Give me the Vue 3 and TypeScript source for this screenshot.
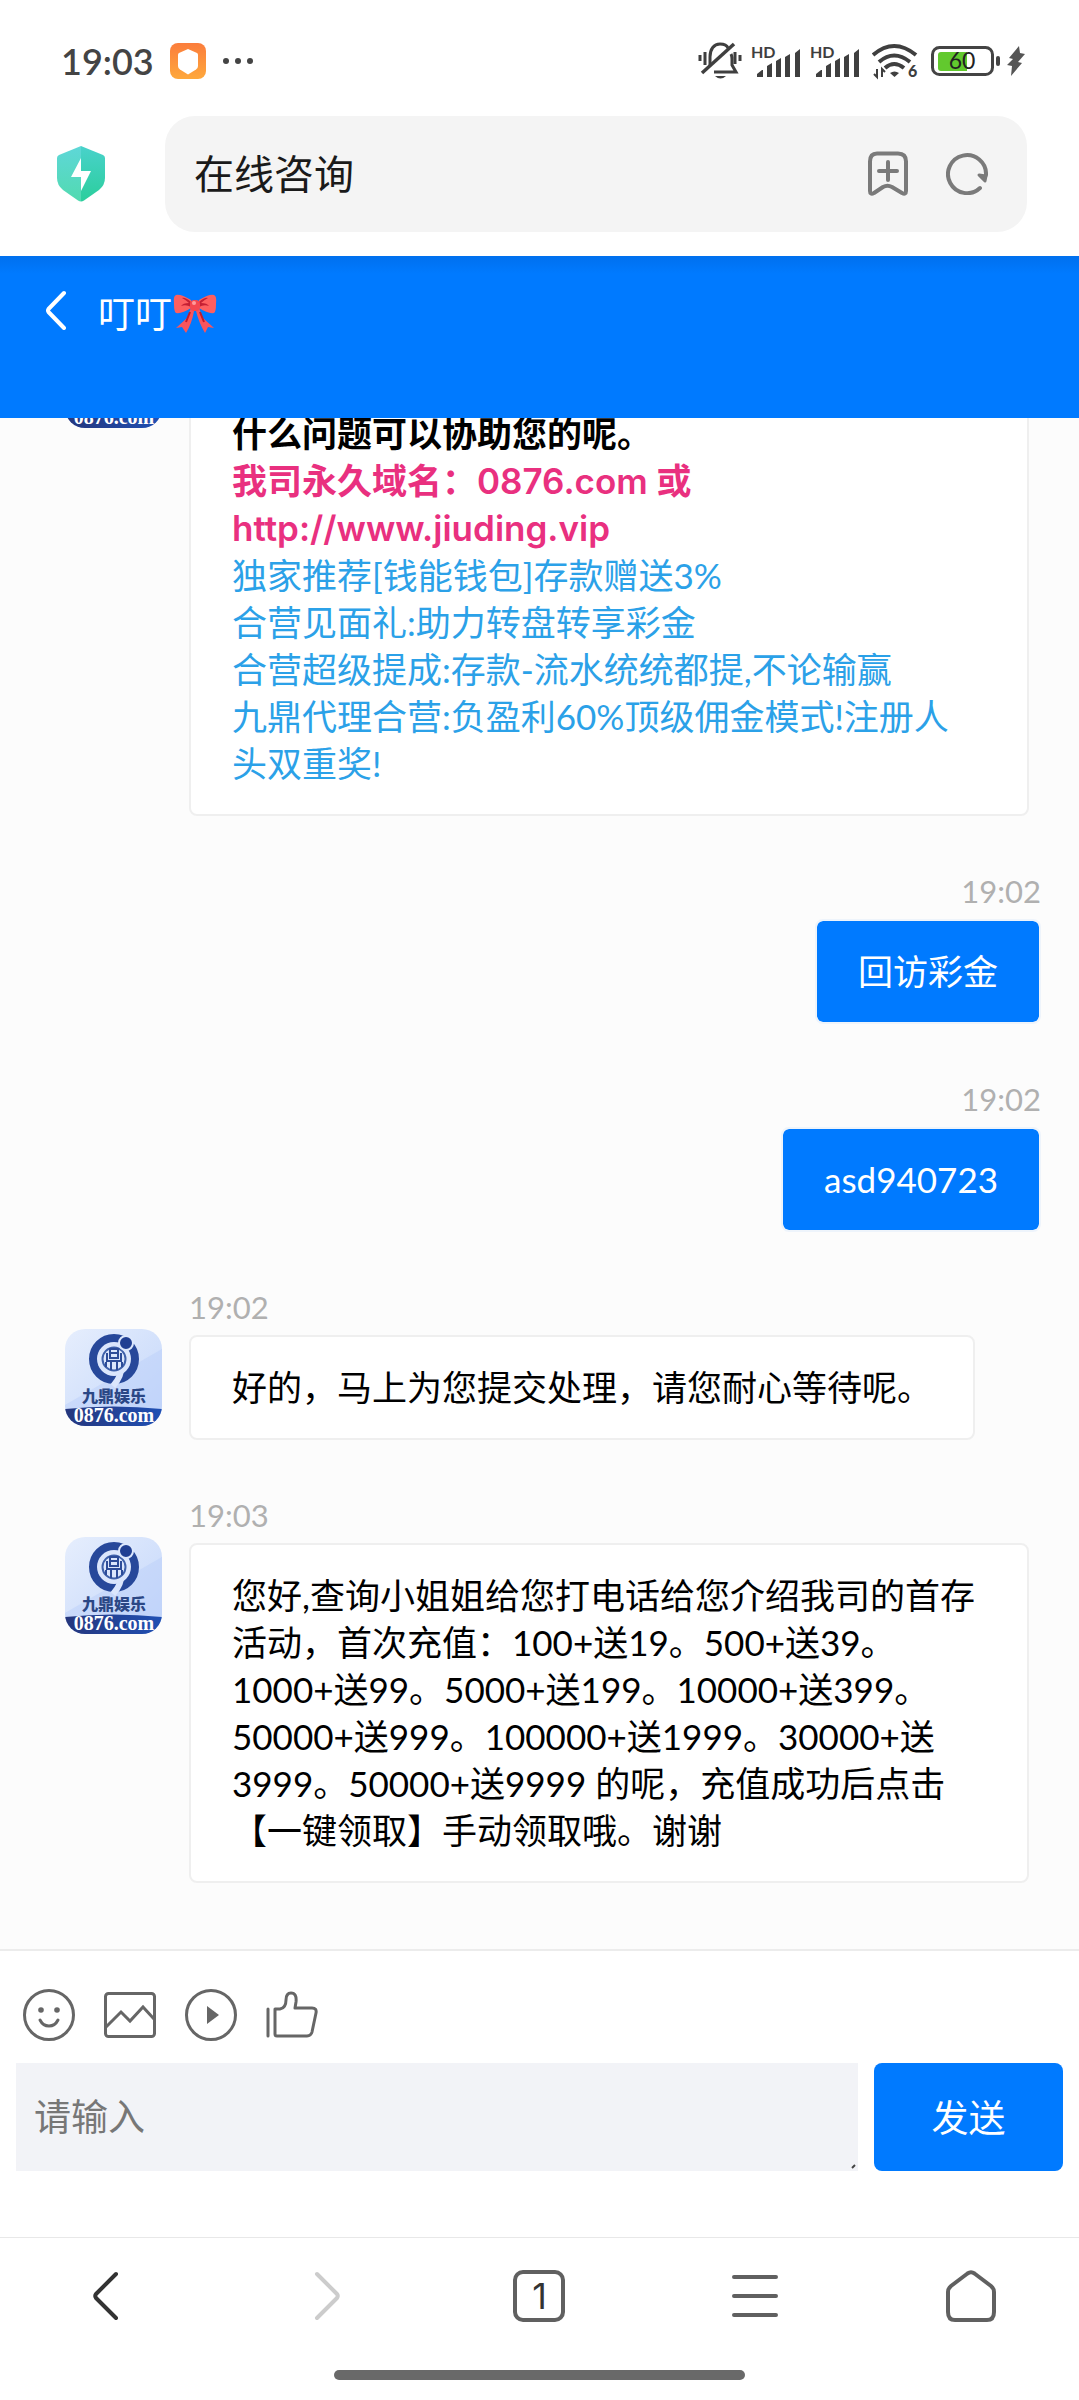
<script setup lang="ts">
import { ref } from 'vue'

interface Line {
  text: string
  tone?: 'strong' | 'pink' | 'sky'
}

interface Message {
  id: number
  mine: boolean
  time?: string
  wide?: boolean
  continued?: boolean
  lines: Line[]
}

const address = ref('在线咨询')
const draft = ref('')

const messages: Message[] = [
  {
    id: 1,
    mine: false,
    wide: true,
    continued: true,
    lines: [
      { text: '什么问题可以协助您的呢。', tone: 'strong' },
      { text: '我司永久域名：0876.com 或', tone: 'pink' },
      { text: 'http://www.jiuding.vip', tone: 'pink' },
      { text: '独家推荐[钱能钱包]存款赠送3%', tone: 'sky' },
      { text: '合营见面礼:助力转盘转享彩金', tone: 'sky' },
      { text: '合营超级提成:存款-流水统统都提,不论输赢', tone: 'sky' },
      { text: '九鼎代理合营:负盈利60%顶级佣金模式!注册人', tone: 'sky' },
      { text: '头双重奖!', tone: 'sky' },
    ],
  },
  { id: 2, mine: true, time: '19:02', lines: [{ text: '回访彩金' }] },
  { id: 3, mine: true, time: '19:02', lines: [{ text: 'asd940723' }] },
  {
    id: 4,
    mine: false,
    time: '19:02',
    lines: [{ text: '好的，马上为您提交处理，请您耐心等待呢。' }],
  },
  {
    id: 5,
    mine: false,
    time: '19:03',
    wide: true,
    lines: [
      { text: '您好,查询小姐姐给您打电话给您介绍我司的首存' },
      { text: '活动，首次充值：100+送19。500+送39。' },
      { text: '1000+送99。5000+送199。10000+送399。' },
      { text: '50000+送999。100000+送1999。30000+送' },
      { text: '3999。50000+送9999 的呢，充值成功后点击' },
      { text: '【一键领取】手动领取哦。谢谢' },
    ],
  },
]
</script>

<template>
  <div class="page">
    <div class="status">
      <div class="status-side">
        <span class="clock">19:03</span>
        <svg class="app-badge" width="36" height="36" viewBox="0 0 36 36">
          <defs>
            <linearGradient id="badge" x1="0" y1="0" x2="0" y2="1">
              <stop offset="0" stop-color="#fb7d3c" />
              <stop offset="1" stop-color="#fea83c" />
            </linearGradient>
          </defs>
          <rect width="36" height="36" rx="8" fill="url(#badge)" />
          <path d="M18 6l9 4q1 .5 1 2v11q0 2-2 3.500l-8 5-8-5q-2-1.500-2-3.500V12q0-1.500 1-2z" fill="#fff" />
        </svg>
        <svg width="32" height="8" viewBox="0 0 32 8" fill="#444">
          <circle cx="4" cy="4" r="3" /><circle cx="16" cy="4" r="3" /><circle cx="28" cy="4" r="3" />
        </svg>
      </div>
      <div class="status-side icons">
        <svg width="44" height="38" viewBox="0 0 44 38" fill="none" stroke="#3f3f3f" stroke-width="3">
          <path d="M12 24V15C12 7 16 2 22 2c4 0 7 1.500 8 4M34 15v8l4 7H16M33 12q1 2 1 5" />
          <path d="M4 31L36 2" stroke-width="3.500" />
          <path d="M2 13v6M7 10v13M37 10v12M42 13v6" />
          <path d="M17 34h11q-5.500 5-11 0z" fill="#3f3f3f" stroke="none" />
        </svg>
        <svg v-for="sim in 2" :key="sim" width="50" height="42" viewBox="0 -6 50 42" fill="#3f3f3f">
          <text x="0" y="12" font-size="16" font-weight="700" font-family="Lato, sans-serif">HD</text>
          <path d="M6 31v-3l5-4h1v7zM16 31V20l5-3v14zM25 31V15l5-3v19zM34 31V11l5-3v23zM44 31V7l5-4v28z" />
        </svg>
        <svg class="wifi" width="46" height="44" viewBox="0 -4 46 44" fill="none" stroke="#3f3f3f" stroke-width="4">
          <path d="M1 12Q22 -6 44 12M7 19Q22 6 38 19M13 25Q22 17 32 25" />
          <path d="M18 30q4.500-3 9 0l-4.500 4z" fill="#3f3f3f" stroke="none" />
          <path d="M5 26v8l-3-3M10 34v-8l3 3" stroke-width="2" />
          <text x="36" y="34" font-size="16" font-weight="900" font-family="Lato, sans-serif" fill="#3f3f3f" stroke="none">6</text>
        </svg>
        <svg class="battery" width="70" height="30" viewBox="0 0 70 30">
          <rect x="1.500" y="1.500" width="60" height="27" rx="7" fill="#fff" stroke="#444" stroke-width="3" />
          <path d="M10 6h26v19H10q-3 0-3-3V9q0-3 3-3z" fill="#62c92e" />
          <rect x="65" y="10" width="4" height="10" rx="2" fill="#444" />
          <text x="31" y="23" font-size="23" text-anchor="middle" font-family="Lato, sans-serif" fill="#222">60</text>
        </svg>
        <svg width="18" height="30" viewBox="0 0 18 30" fill="#555">
          <path d="M12 0L2 12l4 1-6 6 5 1-1 10L15 17l-4-1 7-8-5-1z" />
        </svg>
      </div>
    </div>

    <div class="address">
      <svg class="shield" width="48" height="56" viewBox="0 0 48 56">
        <defs>
          <linearGradient id="shieldL" x1="0" y1="0" x2="0" y2="1">
            <stop offset="0" stop-color="#5ed7d8" /><stop offset="1" stop-color="#52dab0" />
          </linearGradient>
          <linearGradient id="shieldR" x1="0" y1="0" x2="0" y2="1">
            <stop offset="0" stop-color="#49d2cb" /><stop offset="1" stop-color="#2bce9c" />
          </linearGradient>
        </defs>
        <path d="M24 0L2 9q-2 1-2 3v20q0 7 6 12l15 10.500q1.500 1 3 1z" fill="url(#shieldL)" />
        <path d="M24 0l22 9q2 1 2 3v20q0 7-6 12L27 54.500q-1.500 1-3 1z" fill="url(#shieldR)" />
        <path d="M24 12L14 31h10v14l10-20H24z" fill="#fff" />
      </svg>
      <div class="pill">
        <input v-model="address" class="address-input" type="text" aria-label="地址栏" />
        <button class="plain" type="button" aria-label="收藏">
          <svg width="42" height="46" viewBox="0 0 42 46" fill="none" stroke="#7a7a7a" stroke-width="4" stroke-linecap="round" stroke-linejoin="round">
            <path d="M10 2.500h21q8 0 8 8V40q0 4-4 2l-10-6q-4.500-2.500-9 0l-9 6q-4 2-4-2V10.500q0-8 7-8z" />
            <path d="M12 20h18M21 11v18" />
          </svg>
        </button>
        <button class="plain" type="button" aria-label="刷新">
          <svg width="42" height="42" viewBox="0 0 42 42" fill="none" stroke="#7a7a7a" stroke-width="4" stroke-linecap="round">
            <path d="M34 35A19 19 0 1 1 40 22" />
            <path d="M33 22l7 1-1 5z" fill="#7a7a7a" stroke-width="3" stroke-linejoin="round" />
          </svg>
        </button>
      </div>
    </div>

    <header class="chat-head">
      <button class="plain" type="button" aria-label="返回">
        <svg width="20" height="40" viewBox="0 0 20 40" fill="none" stroke="#fff" stroke-width="4" stroke-linecap="round" stroke-linejoin="round">
          <path d="M18 3L2.500 19q-1 1.500 0 3L18 38" />
        </svg>
      </button>
      <h1 class="name">
        叮叮
        <svg class="bow" width="44" height="40" viewBox="0 0 44 40">
          <path d="M18 14l-4 10-11 10 6-1 4 6q6-10 8-22zM26 14l4 10 11 10-6-1-3 6q-6-10-9-22z" fill="#f8555c" />
          <path d="M17 18l-4 10M27 18l4 10" stroke="#bf1a2c" stroke-width="2" />
          <path d="M18 6Q8 0 3 1q-3 1-2 9 0 8 2 9 6 1 15-5zM26 6Q36 0 41 1q3 1 2 9 0 8-2 9-6 1-15-5z" fill="#fd5f60" />
          <path d="M18 8Q12 3 9 4q4 2 7 5-6 0-8 3 5-2 10 1zM26 8q6-5 9-4-4 2-7 5 6 0 8 3-5-2-10 1z" fill="#c42033" />
          <rect x="17" y="6" width="10" height="11" rx="4" fill="#f4474f" />
          <circle cx="21" cy="9" r="2" fill="#ff9c9c" />
        </svg>
      </h1>
    </header>

    <main class="log">
      <article
        v-for="m in messages"
        :key="m.id"
        class="row"
        :class="{ mine: m.mine, wide: m.wide }"
      >
        <svg v-if="!m.mine" class="avatar" :class="{ 'no-time': !m.time }" width="97" height="97" viewBox="0 0 97 97">
          <defs>
            <linearGradient id="sky" x1="0" y1="0" x2="1" y2="1">
              <stop offset="0" stop-color="#e6eefd" /><stop offset="1" stop-color="#c3d6fa" />
            </linearGradient>
            <linearGradient id="band" x1="0" y1="0" x2="1" y2="0">
              <stop offset="0" stop-color="#25367c" /><stop offset="1" stop-color="#2050b4" />
            </linearGradient>
            <clipPath id="round"><rect width="97" height="97" rx="20" /></clipPath>
          </defs>
          <g clip-path="url(#round)">
            <rect width="97" height="97" fill="url(#sky)" />
            <path d="M0 76L97 20v60H0z" fill="#bbd0f9" opacity=".5" />
            <path d="M0 80q48-5 97 0v17H0z" fill="url(#band)" />
            <circle cx="49" cy="30" r="20.500" fill="none" stroke="#27489a" stroke-width="9" />
            <path d="M56 38Q57 47 48 57" fill="none" stroke="#dbe6fc" stroke-width="6" />
            <circle cx="49" cy="30" r="17" fill="#dbe6fc" />
            <circle cx="49" cy="30" r="11.500" fill="none" stroke="#3f61aa" stroke-width="2" />
            <path d="M45 20h8v9h-8zM45 24h8M42 24v8h14v-8M46 32v9M52 32v9M41 33v5M57 33v5" fill="none" stroke="#2d4c98" stroke-width="2" />
            <circle cx="61" cy="14" r="7" fill="#203f93" stroke="#dce7fc" stroke-width="2" />
            <text x="49" y="73" font-size="16" font-weight="900" text-anchor="middle" font-family="'Noto Sans CJK SC', sans-serif" fill="#2b4785">九鼎娱乐</text>
            <text x="49" y="93" font-size="20" font-weight="700" text-anchor="middle" font-family="'Liberation Serif', serif" fill="#fff">0876.com</text>
          </g>
        </svg>
        <div class="body">
          <time v-if="m.time" class="time">{{ m.time }}</time>
          <div class="bubble">
            <div v-if="m.continued" class="above"></div>
            <p v-for="(line, i) in m.lines" :key="i" :class="line.tone">{{ line.text }}</p>
          </div>
        </div>
      </article>
    </main>

    <footer class="composer">
      <div class="tools">
        <button class="plain" type="button" aria-label="表情">
          <svg width="52" height="52" viewBox="0 0 52 52" fill="none" stroke="#666" stroke-width="3">
            <circle cx="26" cy="26" r="24.500" />
            <path d="M17 31q3 6 9 6t9-6" stroke-linecap="round" />
            <circle cx="18" cy="21" r="2.800" fill="#666" stroke="none" /><circle cx="34" cy="21" r="2.800" fill="#666" stroke="none" />
          </svg>
        </button>
        <button class="plain" type="button" aria-label="图片">
          <svg width="52" height="52" viewBox="0 0 52 52" fill="none" stroke="#666" stroke-width="3">
            <rect x="1.500" y="4.500" width="49" height="43" rx="3" />
            <path d="M2 38l15-15 9 9 13-14 11 12" />
          </svg>
        </button>
        <button class="plain" type="button" aria-label="视频">
          <svg width="52" height="52" viewBox="0 0 52 52" fill="none" stroke="#666" stroke-width="3">
            <circle cx="26" cy="26" r="24.500" />
            <path d="M22 17v18l12-9z" fill="#666" stroke="none" />
          </svg>
        </button>
        <button class="plain" type="button" aria-label="点赞">
          <svg width="52" height="52" viewBox="0 0 52 52" fill="none" stroke="#666" stroke-width="3" stroke-linejoin="round">
            <path d="M2 20v27" stroke-linecap="round" />
            <path d="M9 20h5q6-1 6-9 0-7 5-7 6 0 5 9l-1 6h17q5 0 4 5l-4 19q-1 4-5 4H11q-2 0-2-2z" />
          </svg>
        </button>
      </div>
      <form class="entry" @submit.prevent>
        <div class="field">
          <textarea v-model="draft" rows="1" placeholder="请输入" aria-label="请输入"></textarea>
          <svg class="grip" width="5" height="5" viewBox="0 0 5 5"><path d="M1 4L4 1" stroke="#444" stroke-width="2" /></svg>
        </div>
        <button class="send" type="submit">发送</button>
      </form>
    </footer>

    <nav class="bottom">
      <button class="plain" type="button" aria-label="后退">
        <svg width="52" height="52" viewBox="0 0 52 52" fill="none" stroke="#333" stroke-width="4" stroke-linecap="round" stroke-linejoin="round">
          <path d="M34 4L14 24q-1.500 2 0 4l20 20" />
        </svg>
      </button>
      <button class="plain" type="button" aria-label="前进" disabled>
        <svg width="52" height="52" viewBox="0 0 52 52" fill="none" stroke="#ccc" stroke-width="4" stroke-linecap="round" stroke-linejoin="round">
          <path d="M19 4l20 20q1.500 2 0 4L19 48" />
        </svg>
      </button>
      <button class="plain" type="button" aria-label="标签页"><span class="tabs">1</span></button>
      <button class="plain" type="button" aria-label="菜单">
        <svg width="52" height="52" viewBox="0 0 52 52" stroke="#606060" stroke-width="4" stroke-linecap="round">
          <path d="M5 7h42M5 26h42M5 45h42" />
        </svg>
      </button>
      <button class="plain" type="button" aria-label="主页">
        <svg width="52" height="52" viewBox="0 0 52 52" fill="none" stroke="#606060" stroke-width="4">
          <path d="M22.500 3.500q3.500-2.500 7 0L46 16q3 2.500 3 6v20q0 8-7 8H10q-7 0-7-8V22q0-3.500 3-6z" />
        </svg>
      </button>
    </nav>
    <div class="home-bar"></div>
  </div>
</template>

<style>
body {
  background: #fff;
}
</style>

<style scoped>
.page {
  display: flex;
  flex-direction: column;
  height: 100vh;
  background: #fff;
  color: #000;
  font-family: Lato, 'Noto Sans CJK SC', sans-serif;
  font-size: 35px;
  line-height: 47px;
  font-variant-ligatures: none;
  text-spacing-trim: space-all;
}
.page * {
  box-sizing: border-box;
}
svg {
  display: block;
  flex: none;
}
p,
h1 {
  margin: 0;
}
button,
input,
textarea {
  font: inherit;
  border: 0;
  margin: 0;
}
.plain {
  background: none;
  padding: 0;
}

.status {
  display: flex;
  justify-content: space-between;
  align-items: center;
  padding: 41px 54px 35px 61px;
  height: 116px;
}
.status-side {
  display: flex;
  align-items: center;
  gap: 16px;
}
.icons {
  gap: 9px;
}
.clock {
  font-size: 36px;
  font-weight: 600;
  line-height: 40px;
  color: #444;
}
.wifi {
  margin-left: 3px;
}
.battery {
  margin-left: 4px;
  margin-right: -3px;
}

.address {
  display: flex;
  align-items: center;
  padding: 0 52px 24px 57px;
  gap: 60px;
}
.pill {
  flex: 1;
  display: flex;
  align-items: center;
  gap: 37px;
  height: 116px;
  padding: 0 39px 0 29px;
  border-radius: 30px;
  background: #f4f4f4;
}
.address-input {
  flex: 1;
  min-width: 0;
  padding: 0;
  background: none;
  font-size: 40px;
  color: #1a1a1a;
}

.chat-head {
  display: flex;
  align-items: flex-start;
  gap: 32px;
  height: 162px;
  padding: 34px 46px;
  background: linear-gradient(#0070ee, #007aff 18px);
  color: #fff;
}
.name {
  display: flex;
  align-items: center;
  gap: 1px;
  font-size: 37px;
  font-weight: 400;
}

.log {
  flex: 1;
  min-height: 0;
  overflow: hidden;
  display: flex;
  flex-direction: column;
  justify-content: flex-end;
  gap: 55px;
  padding: 0 38px 66px 65px;
  background: #fcfcfc;
}
.row {
  flex: none;
  display: flex;
  align-items: flex-start;
  gap: 27px;
}
.mine {
  justify-content: flex-end;
}
.avatar {
  margin-top: 42px;
}
.avatar.no-time {
  margin-top: -6px;
}
.body {
  display: flex;
  flex-direction: column;
  align-items: flex-start;
}
.mine .body {
  align-items: flex-end;
}
.wide .body {
  flex: 1;
  align-items: stretch;
  margin-right: 12px;
}
.time {
  font-size: 31px;
  line-height: 40px;
  margin-bottom: 8px;
  color: #b0b0b0;
}
.bubble {
  padding: 27px 41px;
  border: 2px solid #efefef;
  border-radius: 8px;
  background: #fff;
  white-space: nowrap;
}
.mine .bubble {
  border-color: #eef4fb;
  background: #007aff;
  background-clip: padding-box;
  color: #fff;
}
.above {
  height: 45px;
}
.strong,
.pink {
  font-family: Inter, 'Noto Sans CJK SC', sans-serif;
  font-weight: 600;
}
.pink {
  color: #e9307f;
}
.sky {
  color: #2ba1e8;
}

.composer {
  border-top: 2px solid #ececec;
  padding: 38px 16px 66px;
}
.tools {
  display: flex;
  gap: 29px;
  padding: 0 7px;
}
.entry {
  display: flex;
  gap: 16px;
  margin-top: 22px;
}
.field {
  position: relative;
  flex: 1;
}
textarea {
  display: block;
  width: 100%;
  height: 108px;
  padding: 30px 18px;
  border-radius: 0;
  background: #f2f3f7;
  font-size: 37px;
  resize: none;
  overflow: hidden;
}
textarea::placeholder {
  color: #777;
}
.grip {
  position: absolute;
  right: 2px;
  bottom: 2px;
}
.send {
  width: 189px;
  border-radius: 8px;
  background: #007aff;
  color: #fff;
  font-size: 37px;
}

.bottom {
  display: grid;
  grid-template-columns: repeat(5, 1fr);
  justify-items: center;
  border-top: 1px solid #e8e8e8;
  padding: 32px 0 48px;
}
.tabs {
  display: block;
  width: 52px;
  height: 52px;
  border: 4px solid #606060;
  border-radius: 10px;
  font-family: Inter, sans-serif;
  font-size: 36px;
  line-height: 44px;
  color: #333;
}
.home-bar {
  align-self: center;
  width: 38%;
  height: 10px;
  margin-bottom: 20px;
  border-radius: 5px;
  background: #696969;
}
</style>
